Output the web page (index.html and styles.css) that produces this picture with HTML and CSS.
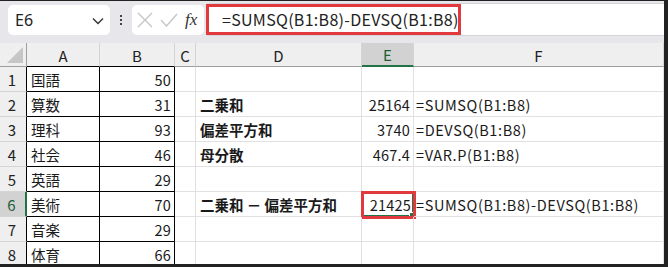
FILE: index.html
```html
<!DOCTYPE html>
<html lang="ja">
<head>
<meta charset="utf-8">
<link rel="stylesheet" href="styles.css">
</head>
<body>
<div class="frame">
  <div class="fbar">
    <div class="namebox">
      <span class="name">E6</span>
      <svg class="chev" width="12" height="8" viewBox="0 0 12 8"><path d="M1 1.5 L6 6.5 L11 1.5" fill="none" stroke="#333" stroke-width="1.4"/></svg>
    </div>
    <div class="dots"><span></span><span></span><span></span></div>
    <div class="fxbox">
      <svg width="18" height="18" viewBox="0 0 18 18"><path d="M2 2 L16 16 M16 2 L2 16" stroke="#c4c4c4" stroke-width="1.3" fill="none"/></svg>
      <svg width="20" height="18" viewBox="0 0 20 18"><path d="M2 9 L7.5 15 L18 3" stroke="#c4c4c4" stroke-width="1.3" fill="none"/></svg>
      <span class="fx">fx</span>
    </div>
    <div class="finput">
      <div class="ftext">=SUMSQ(B1:B8)-DEVSQ(B1:B8)</div>
    </div>
  </div>
  <div class="sheet">
    <div class="h corner"><span class="tri"></span></div>
    <div class="h col bk">A</div>
    <div class="h col bk">B</div>
    <div class="h col">C</div>
    <div class="h col">D</div>
    <div class="h col sel">E</div>
    <div class="h col">F</div>

    <div class="h row">1</div><div class="c a">国語</div><div class="c b n">50</div><div class="c"></div><div class="c"></div><div class="c"></div><div class="c"></div>
    <div class="h row">2</div><div class="c a">算数</div><div class="c b n">31</div><div class="c"></div><div class="c d">二乗和</div><div class="c n">25164</div><div class="c f">=SUMSQ(B1:B8)</div>
    <div class="h row">3</div><div class="c a">理科</div><div class="c b n">93</div><div class="c"></div><div class="c d">偏差平方和</div><div class="c n">3740</div><div class="c f">=DEVSQ(B1:B8)</div>
    <div class="h row">4</div><div class="c a">社会</div><div class="c b n">46</div><div class="c"></div><div class="c d">母分散</div><div class="c n">467.4</div><div class="c f">=VAR.P(B1:B8)</div>
    <div class="h row">5</div><div class="c a">英語</div><div class="c b n">29</div><div class="c"></div><div class="c"></div><div class="c"></div><div class="c"></div>
    <div class="h row rsel">6</div><div class="c a">美術</div><div class="c b n">70</div><div class="c"></div><div class="c d">二乗和 － 偏差平方和</div><div class="c n active">21425<span class="handle"></span><span class="mark"></span></div><div class="c f">=SUMSQ(B1:B8)-DEVSQ(B1:B8)</div>
    <div class="h row">7</div><div class="c a">音楽</div><div class="c b n">29</div><div class="c"></div><div class="c"></div><div class="c"></div><div class="c"></div>
    <div class="h row">8</div><div class="c a">体育</div><div class="c b n">66</div><div class="c"></div><div class="c"></div><div class="c"></div><div class="c"></div>
  </div>
</div>
</body>
</html>
```
FILE: styles.css
```css
html, body { margin: 0; padding: 0; background: #1f1f1f; }
body { width: 668px; height: 267px; overflow: hidden; }
.frame {
  width: 664px; height: 263px;
  border-top: 1px solid #222;
  border-right: 4px solid #222;
  border-bottom: 3px solid #222;
  background: #ffffff;
  overflow: hidden;
  font-family: "Noto Sans CJK JP", sans-serif;
  color: #1a1a1a;
}
.fbar {
  height: 42px;
  background: #e6e6eb;
  display: flex;
  align-items: flex-start;
  box-sizing: border-box;
}
.namebox {
  margin: 4px 0 0 8px;
  width: 102px; height: 30px;
  background: #fff;
  border-radius: 5px;
  box-sizing: border-box;
  display: flex; align-items: center; justify-content: space-between;
  padding: 0 6px 0 7px;
}
.name { font-family: "Noto Sans", sans-serif; font-size: 16px; color: #222; }
.chev { margin-top: 2px; }
.dots {
  width: 22px; height: 30px; margin-top: 4px;
  display: flex; flex-direction: column; align-items: center; justify-content: center; gap: 2px;
}
.dots span { width: 2px; height: 2px; background: #444; display: block; }
.fxbox {
  margin-top: 4px;
  width: 72px; height: 30px;
  background: #fff; border-radius: 5px;
  display: flex; align-items: center;
  padding-left: 4px; gap: 5px;
  box-sizing: border-box;
}
.fx { font-family: "Liberation Serif", serif; font-style: italic; font-size: 17px; color: #333; margin-left: 1px; }
.finput {
  margin: 2px 0 0 3px;
  flex: 1;
  height: 33px;
  background: #fff;
  border-top: 1px solid #d4d4d8;
  border-bottom: 1px solid #d4d4d8;
  box-sizing: border-box;
  position: relative;
}
.ftext {
  position: absolute; left: -1px; top: 0px;
  width: 255px; height: 31px;
  border: 3px solid #e03a3f;
  box-sizing: border-box;
  font-family: "Noto Sans CJK JP", sans-serif;
  font-size: 16px;
  letter-spacing: 0.3px;
  line-height: 25px;
  padding-left: 13px;
  white-space: nowrap;
  color: #222;
}
.sheet {
  display: grid;
  grid-template-columns: 27px 73px 75px 21px 166px 52px 250px;
  grid-template-rows: 24px repeat(8, 25px);
  font-size: 14.5px;
}
.h {
  background: #efefef;
  color: #222;
  box-sizing: border-box;
  display: flex; align-items: center;
  font-family: "Noto Sans CJK JP", sans-serif;
}
.col {
  justify-content: center;
  border-right: 1px solid #d4d4d4;
  border-bottom: 1px solid #9e9e9e;
  font-size: 15px;
  padding-top: 1px;
}
.col.bk { border-bottom-color: #000; }
.col.sel { background: #d2d2d2; color: #1f5f35; border-bottom: 2px solid #217346; }
.corner { border-right: 1px solid #9e9e9e; border-bottom: 1px solid #9e9e9e; position: relative; }
.tri {
  position: absolute; right: 3px; bottom: 3px;
  width: 0; height: 0;
  border-left: 16px solid transparent;
  border-bottom: 16px solid #c6c6c6;
}
.row {
  justify-content: center;
  border-right: 1px solid #000;
  border-bottom: 1px solid #d4d4d4;
  font-size: 15px;
  padding-right: 2px;
}
.row.rsel { background: #d2d2d2; color: #1f5f35; border-right: 2px solid #217346; }
.c {
  box-sizing: border-box;
  border-right: 1px solid #e1e1e1;
  border-bottom: 1px solid #e1e1e1;
  display: flex; align-items: center;
  padding: 0 3px;
  white-space: nowrap;
  position: relative;
}
.c.a, .c.b { border-right-color: #000; border-bottom-color: #000; }
.c.a { padding-left: 4px; }
.n { justify-content: flex-end; letter-spacing: 0.2px; }
.d { font-weight: bold; padding-left: 4px; }
.f { padding-left: 2px; letter-spacing: 0.6px; }
.active { border: 2px solid #217346; padding-right: 1px; }
.handle {
  position: absolute; right: -4px; bottom: -4px;
  width: 5px; height: 5px; background: #217346; border: 1px solid #fff;
}
.mark {
  position: absolute; left: -3px; top: -3px; right: -4px; bottom: -4px;
  border: 3px solid #e03a3f;
}
```
